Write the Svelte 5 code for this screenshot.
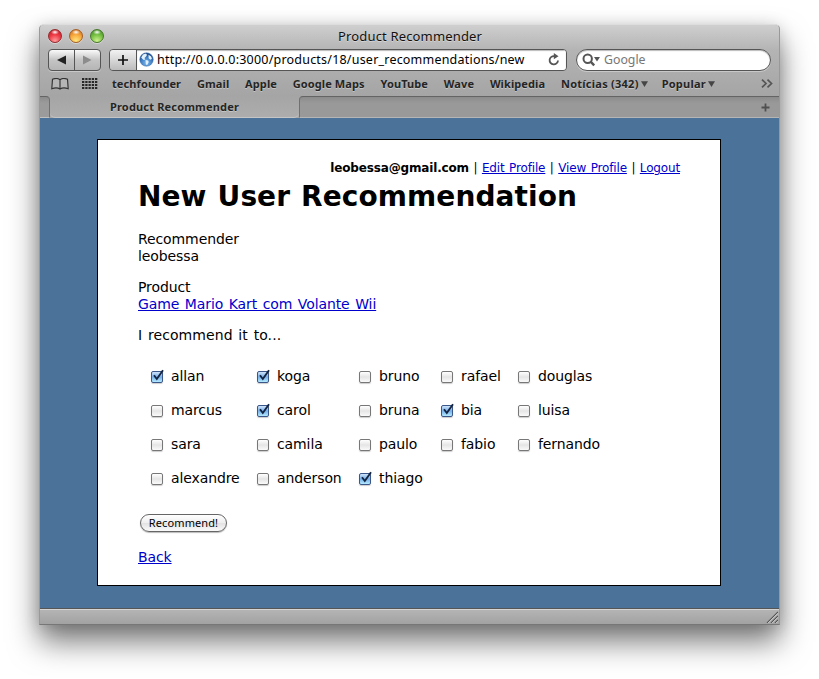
<script>
  const bookmarks = ['techfounder', 'Gmail', 'Apple', 'Google Maps', 'YouTube', 'Wave', 'Wikipedia'];
  const folders = ['Notícias (342)', 'Popular'];
  const columns = [
    [['allan', true], ['marcus', false], ['sara', false], ['alexandre', false]],
    [['koga', true], ['carol', true], ['camila', false], ['anderson', false]],
    [['bruno', false], ['bruna', false], ['paulo', false], ['thiago', true]],
    [['rafael', false], ['bia', true], ['fabio', false]],
    [['douglas', false], ['luisa', false], ['fernando', false]]
  ];
</script>

<div class="desktop">
  <div class="window">
    <header class="chrome">
      <div class="titlebar">
        <div class="lights"><i class="red"></i><i class="amber"></i><i class="green"></i></div>
        <span class="title">Product Recommender</span>
      </div>

      <div class="toolbar">
        <div class="nav">
          <button aria-label="Back"><svg width="11" height="10" viewBox="0 0 11 10"><path d="M10 .5v9L1 5z" fill="#222" /></svg></button>
          <button aria-label="Forward"><svg width="11" height="10" viewBox="0 0 11 10"><path d="M1 .5v9L9.500 5z" fill="#8c8c8c" /></svg></button>
        </div>
        <div class="address">
          <button class="plus" aria-label="Add bookmark"><svg width="12" height="12" viewBox="0 0 12 12"><path d="M6 1v10M1 6h10" stroke="#111" stroke-width="1.700" /></svg></button>
          <div class="field">
            <svg class="globe" width="15" height="15" viewBox="0 0 15 15">
              <defs><radialGradient id="sea" cx=".5" cy=".75" r=".7"><stop offset="0" stop-color="#7db9ec" /><stop offset=".6" stop-color="#3d7cc4" /><stop offset="1" stop-color="#1c4484" /></radialGradient></defs>
              <circle cx="7.500" cy="7.500" r="6.800" fill="url(#sea)" stroke="#4b78ae" stroke-width=".5" />
              <path d="M2.200 5.500 4 2.600 7 1.600 8 3 6.800 4.800 5.500 6 6.300 7.500 4.800 8 3.500 7zM6.500 8l2.600.6.6 1.500-1.500 3-1.300-.7-.2-2.200zM9.500 2.800l2.600 1.600.8 2.300-1.500 1-1.800-1.500z" fill="#e3f1fb" />
            </svg>
            <span class="url">http://0.0.0.0:3000/products/18/user_recommendations/new</span>
            <svg class="reload" width="12" height="13" viewBox="0 0 12 13"><path d="M10 7.500A4.200 4.200 0 1 1 6.500 3.100" fill="none" stroke="#555" stroke-width="1.800" /><path d="M5.800 0 10.500 3.300 5.800 6.300z" fill="#555" /></svg>
          </div>
        </div>
        <div class="search">
          <svg width="19" height="14" viewBox="0 0 19 14"><circle cx="5.700" cy="5.700" r="4.200" fill="none" stroke="#555" stroke-width="2" /><path d="m8.600 8.700 3.600 3.600" stroke="#555" stroke-width="2.400" /><path d="M12 4h6l-3 4.400z" fill="#555" /></svg>
          <span>Google</span>
        </div>
      </div>

      <nav class="bookmarks">
        <svg class="book" width="18" height="12" viewBox="0 0 18 12"><path d="M9 1.800C7.500.5 4 .3 1.500 1.200L.8 10.700C3.500 9.700 7 9.700 9 11c2-1.300 5.500-1.300 8.200-.3L16.500 1.200C14 .3 10.500.5 9 1.800zM9 1.800V11" fill="#b5b5b5" stroke="#333" stroke-width="1.150" /></svg>
        <svg class="grid" width="16" height="11" viewBox="0 0 16 11" fill="#282828">
          {#each [0, 3, 6, 9] as y}{#each [0, 3.250, 6.500, 9.750, 13] as x}<rect {x} {y} width="2.300" height="2" />{/each}{/each}
        </svg>
        {#each bookmarks as name}<span class="bm">{name}</span>{/each}
        {#each folders as name}<span class="bm">{name}<svg width="7" height="6" viewBox="0 0 7 6"><path d="M0 .3h7L3.500 6z" fill="#454545" /></svg></span>{/each}
        <svg class="more" width="12" height="9" viewBox="0 0 12 9"><path d="m1 .7 4 3.800-4 3.800M6.500.7l4 3.800-4 3.800" fill="none" stroke="#555" stroke-width="1.700" /></svg>
      </nav>
    </header>

    <div class="tabs">
      <div class="gap"></div>
      <div class="tab">Product Recommender</div>
      <div class="rest"><svg width="9" height="9" viewBox="0 0 9 9"><path d="M4.500.5v8M.5 4.500h8" stroke="#505050" stroke-width="1.800" /></svg></div>
    </div>

    <main class="page">
      <section class="panel">
        <p class="account"><b>leobessa@gmail.com</b> | <a href="#edit">Edit Profile</a> | <a href="#view">View Profile</a> | <a href="#logout">Logout</a></p>
        <h1>New User Recommendation</h1>
        <p>Recommender<br />leobessa</p>
        <p>Product<br /><a href="#product">Game Mario Kart com Volante Wii</a></p>
        <p class="prompt">I recommend it to...</p>
        <div class="friends">
          {#each columns as people}
            <div class="col">
              {#each people as [name, checked]}
                <div class="friend">
                  <span class="box" class:checked>
                    {#if checked}<svg width="13" height="14" viewBox="0 0 13 14"><path d="M3 6.300 5.800 10 12 1.300" fill="none" stroke="#14243f" stroke-width="1.900" /></svg>{/if}
                  </span>
                  <span>{name}</span>
                </div>
              {/each}
            </div>
          {/each}
        </div>
        <button class="submit">Recommend!</button>
        <p class="back"><a href="#back">Back</a></p>
      </section>
    </main>

    <footer class="status">
      <svg width="12" height="12" viewBox="0 0 12 12"><path d="m1 12 11-11M5 12l7-7M9 12l3-3" stroke="#555" stroke-width="1.100" /><path d="m2.200 12 9.800-9.800M6.200 12l5.800-5.800M10.200 12l1.800-1.800" stroke="#ddd" stroke-width=".8" /></svg>
    </footer>
  </div>
</div>

<style>
  :global(body) { background: #fff; overflow: hidden; }
  * { box-sizing: border-box; }
  .desktop { width: 819px; height: 679px; padding: 24px 39px 0; background: #fff; overflow: hidden; }
  .window {
    width: 741px; height: 601px; display: flex; flex-direction: column;
    border-radius: 5px 5px 0 0; border: 1px solid #999; border-top-color: #ddd; border-bottom-color: #777;
    box-shadow: 0 17px 30px rgba(0, 0, 0, .52), 0 2px 16px rgba(0, 0, 0, .15);
    font-family: "Noto Sans", "Open Sans", sans-serif;
    background: #a8a8a8;
  }
  button { font: inherit; padding: 0; cursor: default; }
  svg { display: block; flex: none; }
  .chrome { height: 71px; background: linear-gradient(#cfcfcf, #b4b4b4 35%, #a5a5a5); border-radius: 4px 4px 0 0; }
  .titlebar { height: 22px; display: flex; align-items: center; }
  .lights { width: 298px; display: flex; gap: 7px; padding-left: 8px; }
  .lights i { width: 14px; height: 14px; border-radius: 50%; border: 1px solid; box-shadow: 0 1px rgba(255, 255, 255, .4); }
  .red { border-color: #922b2c !important; background: radial-gradient(ellipse 4px 2.5px at 50% 18%, #fff, #fff0), radial-gradient(circle at 50% 90%, #ff9d9d, #ee3a45 50%, #b81421); }
  .amber { border-color: #a45f24 !important; background: radial-gradient(ellipse 4px 2.5px at 50% 18%, #fff, #fff0), radial-gradient(circle at 50% 90%, #ffe981, #f7a93c 50%, #c4641a); }
  .green { border-color: #477929 !important; background: radial-gradient(ellipse 4px 2.5px at 50% 18%, #fff, #fff0), radial-gradient(circle at 50% 90%, #d0f391, #77c144 50%, #3a8522); }
  .title { font-size: 13px; line-height: 20px; color: #111; letter-spacing: .16px; text-shadow: 0 1px rgba(255, 255, 255, .4); white-space: nowrap; }

  .toolbar { height: 25px; display: flex; align-items: center; padding-left: 8px; }
  .nav { display: flex; width: 53px; height: 22px; border: 1px solid #555; border-radius: 4px; background: linear-gradient(#fafafa, #c4c4c4 50%, #b5b5b5); box-shadow: 0 1px rgba(255, 255, 255, .35); }
  .nav button { flex: 1; display: grid; place-items: center; border: 0; background: none; }
  .nav button + button { border-left: 1px solid #555; }
  .address { margin-left: 8px; width: 458px; height: 22px; display: flex; border: 1px solid #555; border-radius: 4px; overflow: hidden; }
  .plus { width: 27px; display: grid; place-items: center; border: 0; border-right: 1px solid #555; background: linear-gradient(#f2f2f2, #bcbcbc); }
  .field { flex: 1; display: flex; align-items: center; padding: 0 6px 0 2px; background: #fff; box-shadow: inset 0 1px 1px #bbb; }
  .url { margin-left: 3px; font-size: 12.500px; line-height: 20px; letter-spacing: .21px; white-space: nowrap; color: #000; }
  .reload { margin-left: auto; }
  .search { margin-left: 9px; width: 195px; height: 22px; display: flex; align-items: center; gap: 3px; padding-left: 5px; border: 1px solid #555; border-radius: 11px; background: #fff; box-shadow: inset 0 1px 1px #bbb, 0 1px rgba(255, 255, 255, .35); font-size: 12.300px; color: #777; }

  .bookmarks { height: 24px; display: flex; align-items: center; padding: 0 6px 1px 11px; font-size: 11px; font-weight: 700; letter-spacing: .1px; color: #252525; text-shadow: 0 1px rgba(255, 255, 255, .35); white-space: nowrap; }
  .grid { margin: 0 14px 0 13px; }
  .bm { display: flex; align-items: center; margin-right: 15.800px; }
  .bm svg { margin-left: 2px; }
  .bm:has(svg) { letter-spacing: .25px; margin-right: 14px; }
  .more { margin-left: auto; }

  .tabs { height: 22px; display: flex; background: #a7a7a7; }
  .gap { width: 10px; background: linear-gradient(#8b8b8b, #9b9b9b 30%); border-top: 1px solid #646464; border-right: 1px solid #707070; border-radius: 0 4px 0 0; border-bottom: 1px solid #c0c0c0; }
  .tab { width: 249px; text-align: center; font-size: 11px; font-weight: 700; line-height: 22px; letter-spacing: .17px; color: #252525; text-shadow: 0 1px rgba(255, 255, 255, .35); border-bottom: 1px solid #c5c5c5; border-radius: 0 0 5px 5px; background: linear-gradient(#a5a5a5, #adadad); }
  .rest { flex: 1; display: flex; align-items: center; justify-content: flex-end; padding-right: 9px; background: linear-gradient(#8b8b8b, #999 30%); border-top: 1px solid #646464; border-left: 1px solid #707070; border-bottom: 1px solid #b5b5b5; border-radius: 4px 0 0 0; }

  .page { height: 490px; padding: 21px 58px 0 57px; background: #4b7399; font: 14px/17px "DejaVu Sans", Verdana, sans-serif; color: #000; }
  .panel { width: 624px; height: 447px; border: 1px solid #000; background: #fff; padding: 21px 40px 0; letter-spacing: -.1px; word-spacing: 1.200px; }
  .panel p { margin: 0 0 14px; }
  .panel a { color: #00c; text-decoration: underline; }
  .panel .account { margin: 0; font-size: 12px; line-height: 15px; text-align: right; letter-spacing: -.15px; word-spacing: .85px; white-space: nowrap; }
  .panel .prompt { letter-spacing: .08px; }
  h1 { margin: 0 0 14px; padding-top: 1px; font-size: 28px; line-height: 40px; font-weight: 700; letter-spacing: .08px; word-spacing: 1.200px; white-space: nowrap; }
  .friends { display: flex; margin: 15px 0 19px 13px; height: 136px; }
  .col:nth-child(1) { width: 106px; }
  .col:nth-child(2) { width: 102px; }
  .col:nth-child(3) { width: 82px; }
  .col:nth-child(4) { width: 77px; }
  .friend { height: 34px; display: flex; align-items: center; gap: 8px; }
  .box { position: relative; width: 12px; height: 12px; margin-top: 2px; border: 1px solid #777; border-radius: 2px; background: linear-gradient(#fff, #e5e5e5 50%, #fafafa); box-shadow: 0 1px 1px #ccc; }
  .box.checked { border-color: #3b5689; background: linear-gradient(#cfe4fa, #76aeea 50%, #b4ebff); }
  .box svg { position: absolute; left: -1px; top: -3px; }
  .submit { display: block; margin-left: 2px; width: 87px; height: 18px; border: 1px solid #666; border-radius: 9px; background: linear-gradient(#fff, #eee 50%, #e2e2e2 51%, #fafafa); box-shadow: 0 1px 1px #bbb; font: 11px/14px "Noto Sans", sans-serif; letter-spacing: .1px; color: #000; }
  .panel .back { margin: 17px 0 0; }
  .status { flex: 1; display: flex; justify-content: flex-end; align-items: flex-end; padding: 0 1px 1px 0; border-top: 1px solid #555; box-shadow: inset 0 1px #d5d5d5; background: linear-gradient(#b5b5b5, #a2a2a2); }
</style>
